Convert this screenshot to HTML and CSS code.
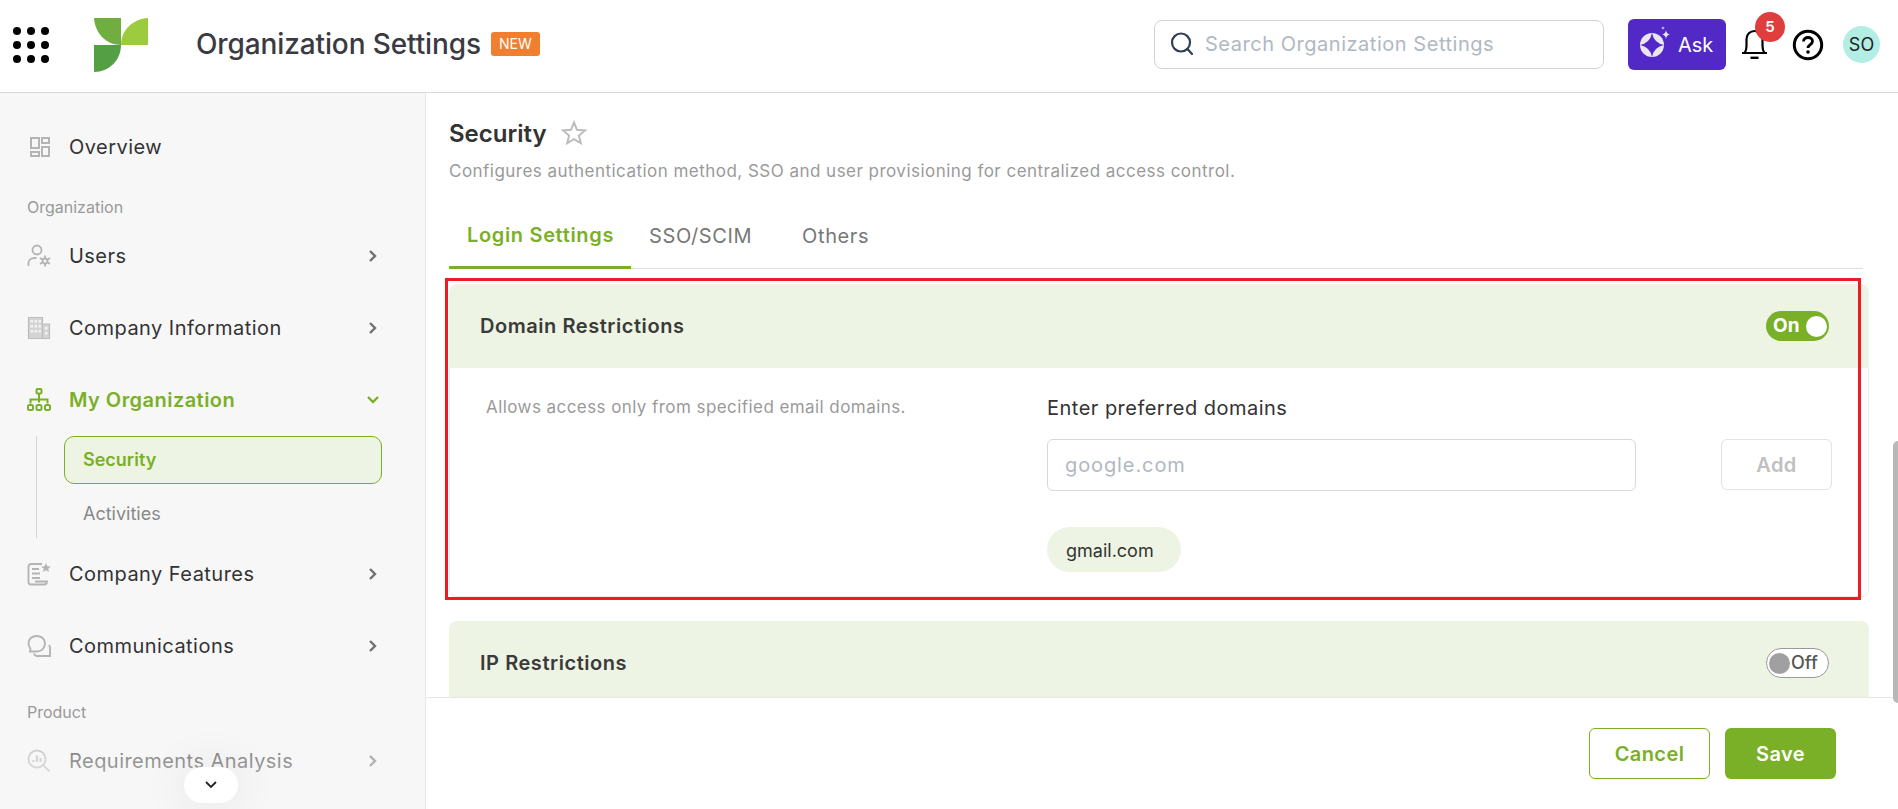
FILE: index.html
```html
<!DOCTYPE html>
<html lang="en">
<head>
<meta charset="utf-8">
<title>Organization Settings</title>
<link rel="stylesheet" href="styles.css">
</head>
<body>
<header class="topbar">
  <div class="brand">
    <svg class="apps" width="36" height="36" viewBox="0 0 36 36"><g fill="#000"><circle cx="4" cy="4" r="4"/><circle cx="18" cy="4" r="4"/><circle cx="32" cy="4" r="4"/><circle cx="4" cy="18" r="4"/><circle cx="18" cy="18" r="4"/><circle cx="32" cy="18" r="4"/><circle cx="4" cy="32" r="4"/><circle cx="18" cy="32" r="4"/><circle cx="32" cy="32" r="4"/></g></svg>
    <svg class="logo" width="54" height="54" viewBox="0 0 54 54"><path d="M0 0H27V27C12 27 1 15 0 0Z" fill="#6fae3f"/><path d="M54 0V27H27C27 12 39 1 54 0Z" fill="#9ccb3d"/><path d="M0 27H27C27 42 15 54 0 54Z" fill="#549e43"/></svg>
    <span class="app-title">Organization Settings</span>
    <span class="new-badge">NEW</span>
  </div>
  <div class="top-actions">
    <div class="search">
      <svg width="26" height="26" viewBox="0 0 26 26" fill="none" stroke="#2f4054" stroke-width="2.2"><circle cx="12" cy="11.5" r="9"/><path d="M18.5 18l4.5 5" stroke-linecap="round"/></svg>
      <span class="search-text">Search Organization Settings</span>
    </div>
    <button class="ask">
      <svg width="32" height="34" viewBox="0 0 32 34"><circle cx="14" cy="20" r="12" fill="#e9e5f3"/><path d="M14 8Q16 18 26 20 16 22 14 32 12 22 2 20 12 18 14 8Z" fill="#5229c7"/><path d="M28 5c.4 2.800 1.300 3.800 4 4.500-2.700.7-3.600 1.700-4 4.500-.4-2.800-1.300-3.800-4-4.500 2.700-.7 3.600-1.700 4-4.500Z" fill="#e9e5f3"/><path d="M25 1c.2 1.400.6 1.800 2 2-1.400.2-1.800.6-2 2-.2-1.400-.6-1.800-2-2 1.400-.2 1.800-.6 2-2Z" fill="#e9e5f3"/></svg>
      <span>Ask</span>
    </button>
    <div class="bell">
      <svg width="27" height="32" viewBox="0 0 27 32" fill="none" stroke="#000" stroke-width="2.200"><path d="M1 24h25M3.500 24c1.500-2 2-4 2-7V10c0-4.500 3.500-8 8-8s8 3.500 8 8v7c0 3 .5 5 2 7"/><path d="M9.500 28.800h8" stroke-width="2.400"/></svg>
      <span class="count">5</span>
    </div>
    <svg class="help" width="32" height="32" viewBox="0 0 32 32" fill="none" stroke="#000"><circle cx="16" cy="16" r="13.700" stroke-width="3"/><path d="M11.500 12.500c0-2.500 2-4 4.500-4s4.500 1.500 4.500 3.800c0 3.500-4.500 3.200-4.500 6.700" stroke-width="2.800"/><circle cx="16" cy="23" r="1.800" fill="#000" stroke="none"/></svg>
    <div class="avatar">SO</div>
  </div>
</header>

<div class="shell">
  <nav class="sidebar">
    <a class="nav-item nav-overview">
      <svg class="nav-icon" viewBox="0 0 24 24" fill="none" stroke="#b4b4b4" stroke-width="2"><rect x="3" y="3" width="8" height="10"/><rect x="14" y="3" width="7" height="5"/><rect x="3" y="17" width="8" height="4"/><rect x="14" y="12" width="7" height="9"/></svg>
      <span class="nav-label">Overview</span>
    </a>
    <div class="nav-group">Organization</div>
    <a class="nav-item">
      <svg class="nav-icon" viewBox="0 0 24 24" fill="none" stroke="#b4b4b4" stroke-width="1.800"><circle cx="10" cy="6" r="4.500"/><path d="M1.500 22v-3c0-3 2.500-5 6-5h2"/><circle cx="18" cy="17" r="2.500"/><path d="M18 11.500v3M18 19.500v3M13 14l2.800 1.700M20.300 18.300l2.700 1.700M13 20l2.800-1.700M20.300 15.700l2.700-1.700"/></svg>
      <span class="nav-label">Users</span>
      <svg class="chev" viewBox="0 0 10 14" fill="none" stroke="#707070" stroke-width="2.400"><path d="M2 2l5 5-5 5"/></svg>
    </a>
    <a class="nav-item">
      <svg class="nav-icon" viewBox="0 0 24 24" fill="#d4d4d4" stroke="#bdbdbd" stroke-width="1.200"><path d="M1.500 1.500h14v21h-14zM15.500 8h7v14.500h-7z"/><g fill="#f2f2f2" stroke="none"><rect x="3.500" y="4" width="2.500" height="2.500"/><rect x="7.500" y="4" width="2.500" height="2.500"/><rect x="11.500" y="4" width="2.500" height="2.500"/><rect x="3.500" y="9" width="2.500" height="2.500"/><rect x="7.500" y="9" width="2.500" height="2.500"/><rect x="11.500" y="9" width="2.500" height="2.500"/><rect x="3.500" y="14" width="2.500" height="2.500"/><rect x="7.500" y="14" width="2.500" height="2.500"/><rect x="11.500" y="14" width="2.500" height="2.500"/><rect x="18" y="11" width="2.500" height="2.500"/><rect x="18" y="16" width="2.500" height="2.500"/></g></svg>
      <span class="nav-label">Company Information</span>
      <svg class="chev" viewBox="0 0 10 14" fill="none" stroke="#707070" stroke-width="2.400"><path d="M2 2l5 5-5 5"/></svg>
    </a>
    <a class="nav-item is-open">
      <svg class="nav-icon" viewBox="0 0 24 24" fill="none" stroke="#7ab027" stroke-width="2"><rect x="9.500" y="1" width="5" height="4.500" rx="1"/><path d="M12 5.500v9M3.500 15.500v-4h17v4"/><rect x="1" y="17" width="5" height="5" rx="1.500"/><rect x="9.500" y="17" width="5" height="5" rx="1.500"/><rect x="18" y="17" width="5" height="5" rx="1.500"/></svg>
      <span class="nav-label">My Organization</span>
      <svg class="chev-down" viewBox="0 0 14 10" fill="none" stroke="#7ab027" stroke-width="2.400"><path d="M2 2l5 5 5-5"/></svg>
    </a>
    <div class="subnav">
      <a class="sub-item is-active">Security</a>
      <a class="sub-item">Activities</a>
    </div>
    <a class="nav-item">
      <svg class="nav-icon" viewBox="0 0 24 24" fill="none" stroke="#b4b4b4" stroke-width="1.800"><path d="M15 2H4a2.500 2.500 0 0 0-2.500 2.500V20A2.500 2.500 0 0 0 4 22.500h13c2 0 3-1 3-3H8M5 7h7M5 11.500h8M5 16h8"/><path d="M19 1l1.400 3.200 3.400.3-2.600 2.200.8 3.300-3-1.800-3 1.800.8-3.300-2.600-2.200 3.400-.3z" fill="#b4b4b4" stroke="none"/></svg>
      <span class="nav-label">Company Features</span>
      <svg class="chev" viewBox="0 0 10 14" fill="none" stroke="#707070" stroke-width="2.400"><path d="M2 2l5 5-5 5"/></svg>
    </a>
    <a class="nav-item">
      <svg class="nav-icon" viewBox="0 0 24 24" fill="none" stroke="#b4b4b4" stroke-width="1.900"><path d="M9.500 2C5 2 1.500 5 1.500 9.500c0 2.500 1 4 2 5.500l-.5 2.500h7c4 0 8-3 8-8C18 5 14.500 2 9.500 2Z"/><path d="M7 19.500c.5 1.500 1 2.500 3 2.500h13v-8c0-1-.3-2-1-3"/></svg>
      <span class="nav-label">Communications</span>
      <svg class="chev" viewBox="0 0 10 14" fill="none" stroke="#707070" stroke-width="2.400"><path d="M2 2l5 5-5 5"/></svg>
    </a>
    <div class="nav-group nav-group-product">Product</div>
    <a class="nav-item">
      <svg class="nav-icon" viewBox="0 0 24 24" fill="none" stroke="#b4b4b4" stroke-width="1.900"><circle cx="10" cy="10" r="8.500"/><path d="M16.500 16.500l6 6"/><path d="M6.500 13v-2M10 13V6.500M13.500 13V9" stroke-width="2.200"/></svg>
      <span class="nav-label">Requirements Analysis</span>
      <svg class="chev" viewBox="0 0 10 14" fill="none" stroke="#707070" stroke-width="2.400"><path d="M2 2l5 5-5 5"/></svg>
    </a>
    <div class="nav-fade"></div>
    <button class="nav-more"><svg width="14" height="10" viewBox="0 0 14 10" fill="none" stroke="#222" stroke-width="1.800"><path d="M2 2l5 5 5-5"/></svg></button>
  </nav>

  <main class="content">
    <div class="scroll-area">
      <div class="page-head">
        <h1 class="page-title">Security
          <svg class="star" width="26" height="26" viewBox="0 0 26 26" fill="none" stroke="#bdbdbd" stroke-width="2"><path d="M13 2.500l3 7.300 7.900.6-6 5.100 1.900 7.700L13 19.100l-6.800 4.100 1.900-7.700-6-5.100 7.900-.6z"/></svg>
        </h1>
        <p class="page-desc">Configures authentication method, SSO and user provisioning for centralized access control.</p>
      </div>
      <div class="tabs">
        <a class="tab is-active">Login Settings</a>
        <a class="tab">SSO/SCIM</a>
        <a class="tab tab-last">Others</a>
      </div>
      <section class="card">
        <div class="card-head">
          <h2 class="card-title">Domain Restrictions</h2>
          <div class="toggle is-on"><span>On</span><i class="knob"></i></div>
        </div>
        <div class="card-body">
          <p class="card-desc">Allows access only from specified email domains.</p>
          <div class="domain-form">
            <label class="field-label">Enter preferred domains</label>
            <div class="field-row">
              <div class="input">google.com</div>
              <button class="add-btn">Add</button>
            </div>
            <div class="chips"><span class="chip">gmail.com</span></div>
          </div>
        </div>
        <div class="highlight"></div>
      </section>
      <section class="card card-second">
        <div class="card-head">
          <h2 class="card-title">IP Restrictions</h2>
          <div class="toggle is-off"><i class="knob"></i><span>Off</span></div>
        </div>
      </section>
    </div>
    <footer class="actions">
      <button class="btn btn-outline">Cancel</button>
      <button class="btn btn-solid">Save</button>
    </footer>
    <div class="scrollbar"></div>
  </main>
</div>
</body>
</html>
```
FILE: styles.css
```css
* { box-sizing: border-box; }
html, body { margin: 0; height: 100%; overflow: hidden; }
body {
  display: flex;
  flex-direction: column;
  font-family: Inter, "Liberation Sans", sans-serif;
  color: #333;
  background: #fff;
}
button { font-family: inherit; }

.topbar {
  height: 93px;
  flex: none;
  display: flex;
  align-items: center;
  justify-content: space-between;
  border-bottom: 1px solid #d9d9d9;
  padding: 0 18px 3px 13px;
  background: #fff;
}
.brand, .top-actions { display: flex; align-items: center; }
.logo { margin-left: 45px; }
.app-title {
  margin-left: 48px;
  padding-bottom: 2px;
  font-size: 28px;
  font-weight: 500;
  letter-spacing: -.12px;
  color: #3a3a42;
  line-height: 34px;
}
.new-badge {
  margin-left: 10px;
  margin-bottom: 2px;
  width: 49px;
  height: 24px;
  line-height: 24px;
  text-align: center;
  background: #f07f2f;
  color: #fff;
  border-radius: 3px;
  font-size: 14px;
}
.search {
  width: 450px;
  height: 49px;
  border: 1px solid #cfd2d6;
  border-radius: 8px;
  display: flex;
  align-items: center;
  padding-left: 14px;
  padding-bottom: 2px;
  gap: 10px;
}
.search-text { font-size: 20px; letter-spacing: .53px; color: #b0b8c1; }
.ask {
  margin-left: 24px;
  width: 98px;
  height: 51px;
  border: 0;
  border-radius: 6px;
  background: #5229c7;
  color: #fff;
  display: flex;
  align-items: center;
  padding: 0 0 0 10px;
  gap: 8px;
  font-size: 20px;
  font-weight: 400;
}
.ask svg { margin-top: -6px; }
.bell { position: relative; margin-left: 15px; width: 27px; height: 32px; }
.count {
  position: absolute;
  left: 14px;
  top: -17px;
  width: 30px;
  height: 30px;
  line-height: 30px;
  text-align: center;
  border-radius: 50%;
  background: #e03e3e;
  color: #fff;
  font-size: 15px;
  font-weight: 600;
}
.help { margin-left: 24px; }
.avatar {
  margin-left: 19px;
  width: 37px;
  height: 37px;
  line-height: 37px;
  text-align: center;
  border-radius: 50%;
  background: #b2eee4;
  font-size: 18px;
  font-weight: 400;
  color: #222;
}

.shell { flex: 1; min-height: 0; display: flex; }

.sidebar {
  width: 426px;
  flex: none;
  position: relative;
  overflow: hidden;
  background: #f7f7f7;
  border-right: 1px solid #e8e8e8;
  padding: 18px 43px 0 27px;
}
.nav-item {
  height: 72px;
  display: flex;
  align-items: center;
  color: #333;
}
.nav-overview { margin-bottom: 14px; padding-left: 1px; }
.nav-icon { width: 24px; height: 24px; flex: none; }
.nav-label { margin-left: 18px; font-size: 20px; flex: 1; letter-spacing: .46px; }
.nav-overview .nav-label { margin-left: 17px; }
.chev { width: 10px; height: 14px; flex: none; margin-right: 4px; }
.chev-down { width: 14px; height: 10px; flex: none; margin-right: 2px; }
.nav-group { height: 20px; line-height: 20px; font-size: 16px; color: #999; margin-bottom: 3px; }
.nav-group-product { margin-top: 20px; margin-bottom: 3px; }
.is-open .nav-label { color: #7ab027; font-weight: 600; }
.subnav {
  margin-left: 9px;
  height: 102px;
  padding-left: 27px;
  border-left: 1px solid #d5d5d5;
  display: flex;
  flex-direction: column;
  gap: 6px;
}
.sub-item {
  height: 48px;
  flex: none;
  display: flex;
  align-items: center;
  padding-left: 19px;
  padding-bottom: 2px;
  font-size: 18px;
  color: #888;
}
.sub-item.is-active {
  background: #eef4e4;
  border: 1px solid #7ab027;
  border-radius: 10px;
  padding-left: 18px;
  color: #7ab027;
  font-weight: 600;
}
.nav-fade {
  position: absolute;
  left: 0;
  right: 0;
  bottom: 0;
  height: 84px;
  background: linear-gradient(to bottom, rgba(247,247,247,.25), rgba(247,247,247,.8));
}
.nav-more {
  position: absolute;
  left: 184px;
  top: 674px;
  width: 54px;
  height: 36px;
  border: 0;
  border-radius: 18px;
  background: #fff;
  box-shadow: 0 0 36px 14px rgba(0,0,0,.035);
  display: flex;
  align-items: center;
  justify-content: center;
}

.content { flex: 1; min-width: 0; position: relative; display: flex; flex-direction: column; background: #fff; }
.scroll-area { flex: 1; min-height: 0; overflow: hidden; padding: 0 29px 0 23px; }
.page-head { padding-top: 25px; }
.page-title {
  margin: 0;
  height: 30px;
  display: flex;
  align-items: center;
  font-size: 24px;
  font-weight: 600;
  color: #333;
}
.star { margin-left: 14px; }
.page-desc { margin: 13px 0 0; height: 20px; line-height: 20px; font-size: 17px; letter-spacing: .47px; color: #9a9a9a; }
.tabs {
  margin-top: 24px;
  margin-right: 6px;
  height: 64px;
  display: flex;
  border-bottom: 1px solid #ddd;
}
.tab {
  height: 64px;
  padding: 0 18px 3px;
  display: flex;
  align-items: center;
  font-size: 20px;
  letter-spacing: .6px;
  color: #777;
}
.tab-last { margin-left: 14px; }
.tab.is-active {
  color: #7ab027;
  font-weight: 600;
  letter-spacing: .66px;
  padding: 0 17px 1px 18px;
  border-bottom: 3px solid #7ab027;
}
.card { position: relative; margin-top: 15px; }
.card-second { margin-top: 24px; }
.card-head {
  height: 84px;
  padding: 0 40px 0 31px;
  display: flex;
  align-items: center;
  justify-content: space-between;
  background: #eef4e4;
  border-radius: 8px 8px 0 0;
}
.card-title { margin: 0; font-size: 20px; font-weight: 600; letter-spacing: .55px; color: #3a3a3a; }
.toggle {
  width: 63px;
  height: 30px;
  border-radius: 15px;
  display: flex;
  align-items: center;
  font-size: 18px;
}
.toggle span { margin-top: -2px; }
.knob { display: block; width: 21px; height: 21px; border-radius: 50%; flex: none; }
.toggle.is-on { background: #7ab027; color: #fff; font-weight: 700; font-size: 19px; padding: 0 2px 0 7px; justify-content: space-between; }
.is-on .knob { background: #fff; }
.toggle.is-off { background: #fff; border: 1px solid #999; color: #555; font-weight: 500; padding-left: 2px; gap: 1px; }
.is-off .knob { background: #a0a0a0; }
.card-body {
  height: 229px;
  padding: 28px 36px 0 36px;
  display: flex;
  border: 1px solid #ececec;
  border-top: 0;
  border-radius: 0 0 8px 8px;
}
.card-desc { margin: 0; width: 561px; flex: none; height: 22px; line-height: 22px; font-size: 17px; letter-spacing: .43px; color: #9a9a9a; }
.domain-form { flex: 1; }
.field-label { display: block; height: 24px; line-height: 24px; font-size: 20px; letter-spacing: .48px; color: #333; }
.field-row { margin-top: 19px; display: flex; align-items: flex-start; }
.input {
  width: 589px;
  height: 52px;
  line-height: 50px;
  padding-left: 17px;
  border: 1px solid #d5d8dc;
  border-radius: 6px;
  font-size: 20px;
  letter-spacing: .9px;
  color: #b0b8c1;
}
.add-btn {
  margin-left: 85px;
  width: 111px;
  height: 51px;
  background: #fff;
  border: 1px solid #e3e3e3;
  border-radius: 6px;
  font-size: 20px;
  letter-spacing: .5px;
  font-weight: 600;
  color: #c0c0c0;
}
.chips { margin-top: 36px; display: flex; }
.chip {
  height: 45px;
  line-height: 47px;
  padding: 0 27px 0 19px;
  border-radius: 23px;
  background: #eef4e4;
  font-size: 18px;
  color: #333;
}
.highlight {
  position: absolute;
  left: -4px;
  top: -6px;
  right: 8px;
  bottom: -3px;
  border: 3px solid #ed1c24;
  pointer-events: none;
}
.actions {
  height: 112px;
  flex: none;
  border-top: 1px solid #e8e8e8;
  background: #fff;
  padding: 30px 62px 0 0;
  display: flex;
  justify-content: flex-end;
  align-items: flex-start;
  gap: 15px;
}
.btn { height: 51px; border-radius: 6px; font-size: 20px; letter-spacing: .4px; font-weight: 600; }
.btn-outline { width: 121px; background: #fff; border: 1px solid #7ab027; color: #7ab027; }
.btn-solid { width: 111px; background: #7ab027; border: 0; color: #fff; }
.scrollbar {
  position: absolute;
  right: 0;
  top: 348px;
  width: 5px;
  height: 262px;
  background: #b8b8b8;
  border-radius: 5px 0 0 5px;
}
```
